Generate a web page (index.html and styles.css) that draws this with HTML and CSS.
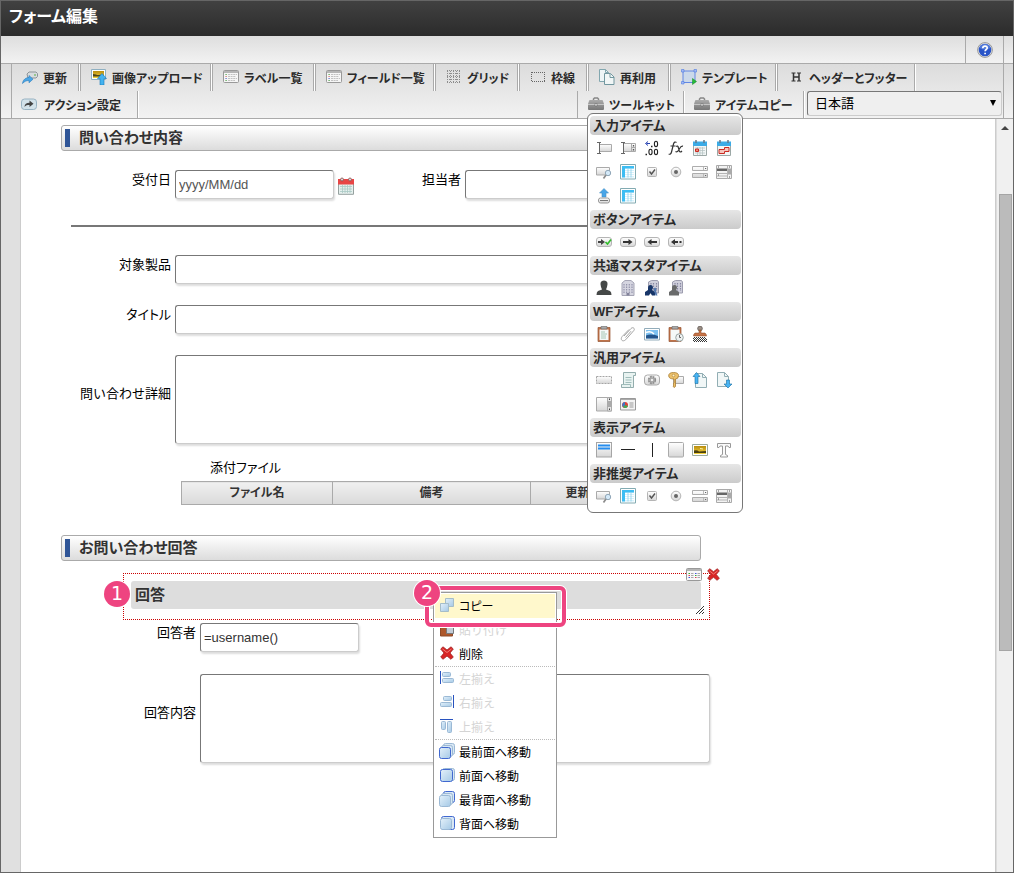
FILE: index.html
```html
<!DOCTYPE html>
<html lang="ja">
<head>
  <meta charset="UTF-8">
  <meta name="viewport" content="width=device-width, initial-scale=1.0">
  <title>フォーム編集</title>
  <link rel="stylesheet" href="styles.css">
</head>
<body>
  <svg class="sprite" aria-hidden="true">
    <defs>
      <linearGradient id="g-gray" x1="0" y1="0" x2="0" y2="1"><stop offset="0" stop-color="#fff"/><stop offset="1" stop-color="#d6d6d6"/></linearGradient>
      <linearGradient id="g-blue" x1="0" y1="0" x2="1" y2="1"><stop offset="0" stop-color="#e4f1fa"/><stop offset="1" stop-color="#a5c9e6"/></linearGradient>
      <linearGradient id="g-case" x1="0" y1="0" x2="0" y2="1"><stop offset="0" stop-color="#ababab"/><stop offset="1" stop-color="#777"/></linearGradient>
      <linearGradient id="g-gold" x1="0" y1="0" x2="0" y2="1"><stop offset="0" stop-color="#b98d10"/><stop offset="1" stop-color="#f5d33c"/></linearGradient>
    </defs>
    <symbol id="i-refresh" viewBox="0 0 16 16"><path d="M5 5l2-2h7l1.500 1.500v3L14 9H6z" fill="#d8dcde" stroke="#8d9498"/><path d="M12 6h2" stroke="#59b044"/><path d="M.5 14.500C1 10.500 4 8.500 7 8.500V6.500l4 3.700-4 3.600V11.500c-3 0-4.500 1-6.500 3z" fill="#4ba6e6" stroke="#2a7dbd" stroke-width=".6"/></symbol>
    <symbol id="i-upload-img" viewBox="0 0 16 16"><path d="M.5.500h14v10H.5z" fill="#fff" stroke="#8fb0c2"/><path d="M2 2h11v7H2z" fill="url(#g-gold)"/><path d="M2 5c3 0 4 1.500 6 1s4-.5 5 0v1.500H2z" fill="#4d4419"/><path d="M11 4.500l4.500 5H13V16H9V9.500H6.500z" fill="#43b3f0" stroke="#1a78b8" stroke-width=".6"/></symbol>
    <symbol id="i-list" viewBox="0 0 16 14"><rect x=".5" y=".5" width="15" height="12" rx="1" fill="#f6f6f6" stroke="#999"/><path d="M1 2h14" stroke="#b5b5b5" stroke-width="2"/><path d="M2.500 4.500h1.200M2.500 10.500h1.200" stroke="#4b9e42"/><path d="M2.500 6.500h1.200" stroke="#c66"/><path d="M2.500 8.500h1.200" stroke="#56c"/><path d="M5 4.500h9M5 6.500h8M5 8.500h9M5 10.500h7" stroke="#b5b5b5" stroke-width=".8" stroke-dasharray="2 .6"/></symbol>
    <symbol id="i-props" viewBox="0 0 16 14"><rect x=".5" y=".5" width="15" height="12" rx="1" fill="#f8f8f8" stroke="#999"/><path d="M1 2h14" stroke="#b5b5b5" stroke-width="2"/><path d="M2.500 5.500h1.500M9 7.500h1.500" stroke="#3cab35"/><path d="M2.500 7.500h1.500M9 9.500h1.500" stroke="#d45"/><path d="M2.500 9.500h1.500M9 5.500h1.500" stroke="#45d"/><path d="M5 5.500h2.500M5 7.500h2.500M5 9.500h2.500M11.500 5.500H14M11.500 7.500H14M11.500 9.500H14" stroke="#aaa"/></symbol>
    <symbol id="i-grid" viewBox="0 0 16 16"><path d="M1 1.500h14M1 4.500h14M1 7.500h14M1 10.500h14M1 13.500h14M1.500 2v12M4.500 2v12M7.500 2v12M10.500 2v12M13.500 2v12" fill="none" stroke="#8d8d8d" stroke-dasharray="1 1" shape-rendering="crispEdges"/></symbol>
    <symbol id="i-frame" viewBox="0 0 16 16"><path d="M2 3.500h13M2 12.500h13M1.500 3v10M14.500 3v10" fill="none" stroke="#666" stroke-dasharray="1 1" shape-rendering="crispEdges"/></symbol>
    <symbol id="i-reuse" viewBox="0 0 16 16"><path d="M.5.500h6l3 3v9h-9z" fill="#eef5f6" stroke="#82a7af"/><path d="M6.500.500v3h3" fill="none" stroke="#82a7af"/><path d="M5.500 4.500h6l3.500 3.500v7.500H5.500z" fill="#f1f6f6" stroke="#72979f"/><path d="M11 5v3.500h4" fill="none" stroke="#72979f"/></symbol>
    <symbol id="i-template" viewBox="0 0 16 16"><path d="M2 2h12v11.500H2z" fill="#cbd9ea" stroke="#6288e4"/><path d="M.5.500h2.500v2.500H.5zM13 .5h2.500v2.500H13zM.5 12.500h2.500v2.500H.5z" fill="#a5bcf5" stroke="#4d7ae0" stroke-width=".6"/><path d="M11.500 9.500l4 3-4 3z" fill="#25bd36" stroke="#138720" stroke-width=".5"/></symbol>
    <symbol id="i-header" viewBox="0 0 16 16"><path d="M3.500 4h4M9 4h4M3.500 12h4M9 12h4" fill="none" stroke="#333"/><path d="M5.500 4v8M11 4v8M5.500 8H11" fill="none" stroke="#333" stroke-width="1.500"/></symbol>
    <symbol id="i-action" viewBox="0 0 16 16"><rect x=".5" y="3" width="15" height="10.500" rx="3" fill="#d3e2ea" stroke="#98b3c3"/><path d="M3.500 11c0-3 2-4.200 5-4.200V4.500l4 3.300-4 3.200V9c-2 0-4 .2-5 2z" fill="#444"/></symbol>
    <symbol id="i-case" viewBox="0 0 16 14"><path d="M5.500 3.500V2L6.500 1h3l1 1v1.500" fill="none" stroke="#888" stroke-width="1.500"/><path d="M1 4q0-1 1-1h12q1 0 1 1l1 3v5q0 1-1 1H1q-1 0-1-1V7z" fill="url(#g-case)"/><path d="M0 7.500h16" stroke="#c5c5c5"/><path d="M7 6.500h2V9H7z" fill="#eee" stroke="#666" stroke-width=".6"/></symbol>
    <symbol id="i-help" viewBox="0 0 16 16"><circle cx="8" cy="8" r="7.400" fill="#e5e5e5" stroke="#999"/><circle cx="8" cy="8" r="6.300" fill="#2a55c8"/><path d="M2.500 6a5.800 5.800 0 0 1 11 0q-5.500 3-11 0" fill="#6e93e6" opacity=".6"/><path d="M5.800 6.300C5.800 3.300 10.300 3.400 10.200 6c0 1.500-2.100 1.600-2.100 3.300M8.100 10.700v1.600" fill="none" stroke="#fff" stroke-width="1.700"/></symbol>
    <symbol id="i-calendar" viewBox="0 0 16 18"><path d="M.5 3.500h15v13.800H.5z" fill="#e6f0ee" stroke="#95a19f"/><path d="M0 2h16v5.500H0z" fill="#e84545"/><circle cx="4" cy="2.500" r="1.500" fill="#d9d9d9" stroke="#8a4a4a" stroke-width=".8"/><circle cx="12" cy="2.500" r="1.500" fill="#d9d9d9" stroke="#8a4a4a" stroke-width=".8"/><path d="M2 9.500h12M2 12h12M2 14.500h12M4.500 8v8M7 8v8M9.500 8v8M12 8v8" stroke="#a9c9c4" stroke-width=".8"/></symbol>
    <symbol id="i-text" viewBox="0 0 16 16"><path d="M3.500 4.500h12v7h-12z" fill="url(#g-gray)" stroke="#aaa"/><path d="M1 2.500h4M3.500 3v10M1 13.500h4" fill="none" stroke="#666"/></symbol>
    <symbol id="i-spin" viewBox="0 0 16 16"><path d="M3.500 3.500h12v8h-12z" fill="url(#g-gray)" stroke="#aaa"/><path d="M1 2.500h4M3.500 3v10M1 13.500h4" fill="none" stroke="#666"/><path d="M11.500 4v7M11.500 7.500h4" stroke="#aaa"/><path d="M13.500 5v1.500M13.500 9v1.500" stroke="#555" stroke-width="1.300"/></symbol>
    <symbol id="i-decimal" viewBox="0 0 16 16"><path d="M2.500 3.500H6M4 1.500l-2.500 2L4 5.500" fill="none" stroke="#2440b0"/><path d="M7 6.500h1.500M1.500 14.500H3" stroke="#222" stroke-width="1.300"/><ellipse cx="12" cy="4" rx="1.600" ry="2.700" fill="none" stroke="#222" stroke-width="1.100"/><ellipse cx="6.500" cy="12" rx="1.600" ry="2.700" fill="none" stroke="#222" stroke-width="1.100"/><ellipse cx="12" cy="12" rx="1.600" ry="2.700" fill="none" stroke="#222" stroke-width="1.100"/></symbol>
    <symbol id="i-fx" viewBox="0 0 16 16"><path d="M8.500 2.500Q6.500 1 5.500 4L3.500 12q-.8 3-2.800 2M2.500 6h5M8 6.500q1.800-1.500 2.500 1.500l.8 3q.7 2 2.700 0M15 6.200q-2-.5-3.500 2.500l-1 1.600Q9 12.500 7.500 11.500" fill="none" stroke="#333" stroke-width="1.200"/></symbol>
    <symbol id="i-date" viewBox="0 0 16 16"><path d="M1.500 2.500h13v13h-13z" fill="#f2f6f6" stroke="#9ca8a6"/><path d="M1 1.500h14V6H1z" fill="#3cabe6"/><path d="M4 0v3M12 0v3" stroke="#678" stroke-width="1.500"/><path d="M3 8h10M3 10.500h10M3 13h10M5.500 7v8M8 7v8M10.500 7v8" stroke="#b3c0c0" stroke-width=".7"/><path d="M3.500 9h3v2.500h-3z" fill="#ef8d7b" stroke="#c92a22"/></symbol>
    <symbol id="i-period" viewBox="0 0 16 16"><path d="M1.500 2.500h13v13h-13z" fill="#f2f6f6" stroke="#9ca8a6"/><path d="M1 1.500h14V6H1z" fill="#3cabe6"/><path d="M4 0v3M12 0v3" stroke="#678" stroke-width="1.500"/><path d="M8.500 7.500h4.500v4H8.500v2H3v-4h5.500z" fill="#f6c4bc" stroke="#c92a22"/></symbol>
    <symbol id="i-lookup" viewBox="0 0 16 16"><path d="M.5 3.500h13V11H.5z" fill="url(#g-gray)" stroke="#aaa"/><circle cx="12" cy="9" r="2.700" fill="#d4e9f8" stroke="#91a7b8"/><path d="M10 11l-2.500 3.500" stroke="#8c8c8c" stroke-width="1.700"/></symbol>
    <symbol id="i-table" viewBox="0 0 16 16"><path d="M.5.500h15v14.500H.5z" fill="#fff" stroke="#82abb2"/><path d="M2 2h12v11.500H2z" fill="#d8f2fc"/><path d="M2 2h12v2.500H2zM2 2h3v11.500H2z" fill="#3dbdf3"/><path d="M5 5.500h9M5 7.500h9M5 9.500h9M5 11.500h9" stroke="#fff"/><path d="M8 4.500v9M11 4.500v9" stroke="#8ecfe8" stroke-width=".8"/></symbol>
    <symbol id="i-check" viewBox="0 0 16 16"><rect x="3.500" y="3.500" width="9" height="9" rx="1" fill="url(#g-gray)" stroke="#b5b5b5"/><path d="M5.500 7.500l2 2.500 3.500-4.500" fill="none" stroke="#555" stroke-width="1.400"/></symbol>
    <symbol id="i-radio" viewBox="0 0 16 16"><circle cx="8" cy="8" r="4.800" fill="url(#g-gray)" stroke="#b5b5b5"/><circle cx="8" cy="8" r="2" fill="#666"/></symbol>
    <symbol id="i-combo" viewBox="0 0 16 16"><path d="M.5 2.500h15v4H.5zM.5 9.500h15v4H.5z" fill="url(#g-gray)" stroke="#adadad"/><path d="M11.500 3v3M11.500 10v3" stroke="#bbb"/><path d="M13 4.500h1.200M13 11.500h1.200" stroke="#666"/></symbol>
    <symbol id="i-listbox" viewBox="0 0 16 16"><path d="M.5 1.500h15v13H.5z" fill="#f3f3f3" stroke="#aaa"/><path d="M1 9.500h10M1 12h10M11.500 2v13" stroke="#b5b5b5"/><path d="M1 4.500h10v2.500H1z" fill="#666"/><path d="M12 4.500h3v6h-3z" fill="#aaa"/><path d="M13.500 2.500v1M13.500 12.500v1M2.500 2.500v1M2.500 10.500v1" stroke="#555"/></symbol>
    <symbol id="i-file" viewBox="0 0 16 16"><path d="M8 .5L12.500 5H10v4H6V5H3.500z" fill="#48a5e8" stroke="#4a92c5" stroke-width=".6"/><rect x="2.500" y="10" width="11" height="5" rx="2" fill="url(#g-gray)" stroke="#999"/><path d="M4 12.500h8" stroke="#777"/></symbol>
    <symbol id="i-btn-ok" viewBox="0 0 16 16"><rect x=".5" y="3.500" width="15" height="9" rx="2.500" fill="url(#g-gray)" stroke="#b5b5b5"/><path d="M2 7H5V5l4 3-4 3V9H2z" fill="#444"/><path d="M9.500 8l2 2L15 5.500" fill="none" stroke="#31bd2b" stroke-width="1.600"/></symbol>
    <symbol id="i-btn-next" viewBox="0 0 16 16"><rect x=".5" y="3.500" width="15" height="9" rx="2.500" fill="url(#g-gray)" stroke="#b5b5b5"/><path d="M3 7h5.500V5l4 3-4 3V9H3z" fill="#333"/></symbol>
    <symbol id="i-btn-back" viewBox="0 0 16 16"><rect x=".5" y="3.500" width="15" height="9" rx="2.500" fill="url(#g-gray)" stroke="#b5b5b5"/><path d="M13 7H7.500V5l-4 3 4 3V9H13z" fill="#333"/></symbol>
    <symbol id="i-btn-return" viewBox="0 0 16 16"><rect x=".5" y="3.500" width="15" height="9" rx="2.500" fill="url(#g-gray)" stroke="#b5b5b5"/><path d="M10 7H7V5L3 8l4 3V9h3zM11.500 7h2v2h-2z" fill="#333"/></symbol>
    <symbol id="i-user" viewBox="0 0 16 16"><path d="M5 7Q3 .5 8 .5T11 7L10 9.500l4 1.500q1.500 1 1.500 4H.5q0-3 1.500-4l4-1.500z" fill="#454847"/></symbol>
    <symbol id="i-building" viewBox="0 0 16 16"><path d="M2 15.500V3l3-2.500h6L14 3v12.500z" fill="#d5d5e0" stroke="#a5a5b5"/><path d="M4 4v9M6.600 4v9M9.300 4v9M12 4v9" stroke="#9595ac" stroke-width="1.200" stroke-dasharray="1.500 1"/><path d="M6.500 13h3v2.500h-3z" fill="#82829a"/></symbol>
    <symbol id="i-user-org" viewBox="0 0 16 16"><path d="M4.500 13V2l3-1.500h6l1 1.500V13z" fill="#d0d0dc" stroke="#9d9daf"/><path d="M7 3v8M9.500 3v8M12.500 3v8" stroke="#8888a2" stroke-width="1.200" stroke-dasharray="1.500 1"/><path d="M4 8q0-3 2.500-3T9 8L8 10l3 2v3.500H8L6.500 13 5 15.500H1V12l3-2z" fill="#173568"/><path d="M9.500 9q1.500-3 3 0L12 11l1.500 4.500h-2z" fill="#5478ae"/></symbol>
    <symbol id="i-user-role" viewBox="0 0 16 16"><path d="M4.500 13V2l3-1.500h6l1 1.500V13z" fill="#d0d0dc" stroke="#9d9daf"/><path d="M7 3v8M9.500 3v8M12.500 3v8" stroke="#8888a2" stroke-width="1.200" stroke-dasharray="1.500 1"/><path d="M4 8q0-3 2.500-3T9 8L8 10l3 2v3.500H1V12l3-2z" fill="#696b6b"/></symbol>
    <symbol id="i-clipboard" viewBox="0 0 16 16"><path d="M2 1.500h12v14H2z" fill="#c0734a" stroke="#955530" stroke-width=".7"/><path d="M3.500 3.500h9v10.500h-9z" fill="#f5f9f8"/><path d="M5 .5h6V3H5z" fill="#aaa" stroke="#666" stroke-width=".6"/><path d="M5 6h4M5 8h6M5 10h5M5 12h5" stroke="#93baa2" stroke-width=".8"/></symbol>
    <symbol id="i-clip" viewBox="0 0 16 16"><path d="M4 10l7-7.500c2-2 4.500.2 2.700 2.200l-8 9c-3 2.800-6-.2-3.500-3.200L9 3.500M5.500 11.500l5.500-6.300" fill="none" stroke="#a5a5a5"/></symbol>
    <symbol id="i-image" viewBox="0 0 16 16"><path d="M.5 2.500h15v11.500H.5z" fill="#fff" stroke="#92acba"/><path d="M2 4h12v8.500H2z" fill="#7cc0f0"/><path d="M2 9.500q5-2 12 .5v2.500H2z" fill="#24558c"/><path d="M2 6.500q5-2 8 1.500" stroke="#fff" stroke-width="1.500" fill="none"/></symbol>
    <symbol id="i-clip-time" viewBox="0 0 16 16"><path d="M1 1.500h12v14H1z" fill="#c0734a" stroke="#955530" stroke-width=".7"/><path d="M2.500 3.500h9v10.500h-9z" fill="#f5f9f8"/><path d="M4 .5h6V3H4z" fill="#aaa" stroke="#666" stroke-width=".6"/><circle cx="11.500" cy="11.500" r="3.800" fill="#edf1f1" stroke="#99a5a4"/><path d="M11.500 9v2.500H13" stroke="#666" fill="none"/></symbol>
    <symbol id="i-stamp" viewBox="0 0 16 16"><circle cx="8" cy="2.500" r="2.300" fill="#9b9087" stroke="#716862"/><path d="M7 4h2v3h4q1.500 1 1.500 3h-13q0-2 1.500-3h4z" fill="#c8754a" stroke="#86401e" stroke-width=".5"/><path d="M2 11.500h12M1 12.500h14M2 13.500h13M1 14.500h14M2 15.500h13" stroke="#333" stroke-dasharray="1 1" shape-rendering="crispEdges"/></symbol>
    <symbol id="i-group" viewBox="0 0 16 16"><path d="M.5 4.500h15v7H.5z" fill="url(#g-gray)" stroke="#a5a5a5" stroke-dasharray="2 1"/></symbol>
    <symbol id="i-script" viewBox="0 0 16 16"><path d="M3.500 .5h12v3h-2v12H1.500v-3h2z" fill="#e8f3f1" stroke="#93adad"/><path d="M5.500 5.500h6M5.500 8h6M5.500 10.500h6M1.500 12.500h9v3" stroke="#a0bdbb" fill="none"/></symbol>
    <symbol id="i-gear" viewBox="0 0 16 16"><rect x=".5" y="3" width="15" height="10" rx="3" fill="url(#g-gray)" stroke="#aaa"/><circle cx="8" cy="8" r="3.300" fill="none" stroke="#8c8c8c" stroke-width="1.700" stroke-dasharray="2 .6"/><circle cx="8" cy="8" r="2" fill="#eee" stroke="#8c8c8c"/></symbol>
    <symbol id="i-key" viewBox="0 0 16 16"><path d="M5.500 4.500h10v7h-10z" fill="url(#g-gray)" stroke="#aaa"/><path d="M.7 4Q.5 .5 5.500 .5t5 3Q10.500 7 7.500 7v7.500L6 15.500 5 14l1-1-1-1 1-1V7Q1 7 .7 4z" fill="#ecc06a" stroke="#a87c32" stroke-width=".8"/><circle cx="5.500" cy="3.500" r="1.300" fill="#fff3c8" stroke="#9c7026" stroke-width=".5"/></symbol>
    <symbol id="i-doc-up" viewBox="0 0 16 16"><path d="M3.500 1.500h7l4 4v10h-11z" fill="#f1f7f7" stroke="#92aeb4"/><path d="M10.500 1.500v4h4" fill="none" stroke="#92aeb4"/><path d="M4.500.500L8 4.500H6v7H3v-7H1z" fill="#47b3f3" stroke="#176d9f" stroke-width=".6"/></symbol>
    <symbol id="i-doc-down" viewBox="0 0 16 16"><path d="M1.500.500h7l4 4v10h-11z" fill="#f1f7f7" stroke="#92aeb4"/><path d="M8.500.500v4h4" fill="none" stroke="#92aeb4"/><path d="M10.500 8h3v4h2.500L12 16l-4-4h2.500z" fill="#47b3f3" stroke="#176d9f" stroke-width=".6"/></symbol>
    <symbol id="i-scroll" viewBox="0 0 16 16"><path d="M.5 1.500h15v13.500H.5z" fill="url(#g-gray)" stroke="#aaa"/><path d="M11.500 1.500h4V15h-4z" fill="#e5e5e5" stroke="#aaa"/><path d="M12 5h3v6h-3z" fill="#aaa"/><path d="M13.500 2.500v1.500M13.500 12.500V14" stroke="#444"/></symbol>
    <symbol id="i-chart" viewBox="0 0 16 16"><path d="M.5 2.500h15v11.500H.5z" fill="#f3f3f3" stroke="#999"/><path d="M1 3.500h14" stroke="#aaa"/><circle cx="5" cy="9" r="3" fill="#df4138"/><path d="M5 9V6A3 3 0 0 0 3 11z" fill="#3979cd"/><path d="M5 9l-2 2a3 3 0 0 0 5-1z" fill="#43ab58"/><path d="M9.500 7h4M9.500 9h4M9.500 11h4" stroke="#999"/></symbol>
    <symbol id="i-label" viewBox="0 0 16 16"><rect x=".5" y=".5" width="15" height="14.500" fill="url(#g-gray)" stroke="#a5a5a5"/><path d="M2 2.500h12v2H2zM2 5.500h12v2H2z" fill="#258df0"/></symbol>
    <symbol id="i-hline" viewBox="0 0 16 16"><path d="M1 7.500h14" stroke="#222"/></symbol>
    <symbol id="i-vline" viewBox="0 0 16 16"><path d="M8.500 1v14" stroke="#222"/></symbol>
    <symbol id="i-box" viewBox="0 0 16 16"><rect x=".5" y=".5" width="15" height="14.500" rx="1" fill="url(#g-gray)" stroke="#aaa"/></symbol>
    <symbol id="i-photo" viewBox="0 0 16 16"><path d="M.5 2.500h15v11H.5z" fill="#fff" stroke="#9cab9c"/><path d="M2 4h12v8H2z" fill="url(#g-gold)"/><path d="M2 8.500q3-1 5 1l7-.5V11H2z" fill="#4b4110"/><path d="M8 6.500l3 .5" stroke="#fff5a0"/></symbol>
    <symbol id="i-t" viewBox="0 0 16 16"><path d="M1.500 1.500h13v4H13L12 4H9.500v8.500l2 1v1.500h-7v-1.500l2-1V4H4L3 5.500H1.500z" fill="#fafafa" stroke="#999"/></symbol>
    <symbol id="i-delete" viewBox="0 0 14 14"><path d="M3 .8L7 4 11 .8 13.300 3 10 7l3.300 4-2.300 2.300L7 10l-4 3.300L.7 11 4 7 .7 3z" fill="#d92525" stroke="#9e2424" stroke-width=".8"/><path d="M2.500 3L7 6.500 11.500 3" fill="none" stroke="#f08078"/></symbol>
    <symbol id="i-resize" viewBox="0 0 8 8"><path d="M0 8L8 0M3 8l5-5M6 8l2-2" stroke="#333"/></symbol>
    <symbol id="i-copy" viewBox="0 0 16 16"><path d="M6.500 1.500h8v8h-8z" fill="url(#g-blue)" stroke="#a5bdc9"/><path d="M1.500 6.500h8v8h-8z" fill="url(#g-blue)" stroke="#a5bdc9"/></symbol>
    <symbol id="i-paste" viewBox="0 0 16 16"><path d="M1.500 2h12v13h-12z" fill="#ad572b" stroke="#8c4a28"/><path d="M4 1h7v3H4z" fill="#777"/><path d="M7.500 4.500h7v8h-7z" fill="#c4ccd7" stroke="#777"/></symbol>
    <symbol id="i-left" viewBox="0 0 16 16"><path d="M1.500 1v13" stroke="#2852bf"/><rect x="3.500" y="2.500" width="8" height="4" rx="1" fill="url(#g-blue)" stroke="#9bb9d5"/><rect x="3.500" y="8.500" width="11" height="4" rx="1" fill="url(#g-blue)" stroke="#9bb9d5"/></symbol>
    <symbol id="i-right" viewBox="0 0 16 16"><path d="M14.500 1v13" stroke="#2852bf"/><rect x="4.500" y="2.500" width="8" height="4" rx="1" fill="url(#g-blue)" stroke="#9bb9d5"/><rect x="1.500" y="8.500" width="11" height="4" rx="1" fill="url(#g-blue)" stroke="#9bb9d5"/></symbol>
    <symbol id="i-top" viewBox="0 0 16 16"><path d="M1 1.500h13" stroke="#2852bf"/><rect x="2.500" y="3.500" width="4" height="8" rx="1" fill="url(#g-blue)" stroke="#9bb9d5"/><rect x="8.500" y="3.500" width="4" height="11" rx="1" fill="url(#g-blue)" stroke="#9bb9d5"/></symbol>
    <symbol id="i-front-most" viewBox="0 0 16 16"><rect x="4.500" y=".5" width="11" height="11" rx="2" fill="#d8e7f4" stroke="#9bb9d5"/><rect x="2.500" y="2.500" width="11" height="11" rx="2" fill="#d8e7f4" stroke="#9bb9d5"/><rect x=".5" y="4.500" width="11" height="11" rx="2" fill="url(#g-blue)" stroke="#4068d0"/></symbol>
    <symbol id="i-front" viewBox="0 0 16 16"><rect x="3.500" y="1.500" width="12" height="12" rx="2" fill="#d8e7f4" stroke="#9bb9d5"/><rect x="1.500" y="2.500" width="12" height="12" rx="2" fill="url(#g-blue)" stroke="#4068d0"/></symbol>
    <symbol id="i-back-most" viewBox="0 0 16 16"><rect x="4.500" y=".5" width="11" height="11" rx="2" fill="#d8e7f4" stroke="#4068d0"/><rect x="2.500" y="2.500" width="11" height="11" rx="2" fill="#d8e7f4" stroke="#9bb9d5"/><rect x=".5" y="4.500" width="11" height="11" rx="2" fill="url(#g-blue)" stroke="#9bb9d5"/></symbol>
    <symbol id="i-back" viewBox="0 0 16 16"><rect x="2.500" y="1.500" width="13" height="13" rx="2" fill="#d8e7f4" stroke="#4068d0"/><rect x="1.500" y="3.500" width="11" height="11" rx="2" fill="url(#g-blue)" stroke="#9bb9d5"/></symbol>
  </svg>

  <div class="window">
    <header class="titlebar"><h1>フォーム編集</h1></header>

    <div class="helpbar">
      <button class="help" aria-label="ヘルプ"><svg class="icon"><use href="#i-help"/></svg></button>
    </div>

    <div class="toolbar">
      <div class="toolbar-row main-tools">
        <button class="tool"><svg class="icon"><use href="#i-refresh"/></svg>更新</button>
        <button class="tool"><svg class="icon"><use href="#i-upload-img"/></svg>画像アップロード</button>
        <button class="tool"><svg class="icon"><use href="#i-list"/></svg>ラベル一覧</button>
        <button class="tool"><svg class="icon"><use href="#i-list"/></svg>フィールド一覧</button>
        <button class="tool"><svg class="icon"><use href="#i-grid"/></svg>グリッド</button>
        <button class="tool"><svg class="icon"><use href="#i-frame"/></svg>枠線</button>
        <button class="tool"><svg class="icon"><use href="#i-reuse"/></svg>再利用</button>
        <button class="tool"><svg class="icon"><use href="#i-template"/></svg>テンプレート</button>
        <button class="tool"><svg class="icon"><use href="#i-header"/></svg>ヘッダーとフッター</button>
      </div>
      <div class="toolbar-row sub-tools">
        <button class="tool action"><svg class="icon"><use href="#i-action"/></svg>アクション設定</button>
        <div class="toolkit">
          <button class="tool"><svg class="icon"><use href="#i-case"/></svg>ツールキット</button>
          <div class="palette">
            <section>
              <h2>入力アイテム</h2>
              <div class="items">
                <button aria-label="文字列"><svg class="icon"><use href="#i-text"/></svg></button>
                <button aria-label="数値"><svg class="icon"><use href="#i-spin"/></svg></button>
                <button aria-label="小数"><svg class="icon"><use href="#i-decimal"/></svg></button>
                <button aria-label="関数"><svg class="icon"><use href="#i-fx"/></svg></button>
                <button aria-label="日付"><svg class="icon"><use href="#i-date"/></svg></button>
                <button aria-label="期間"><svg class="icon"><use href="#i-period"/></svg></button>
                <button aria-label="検索"><svg class="icon"><use href="#i-lookup"/></svg></button>
                <button aria-label="表"><svg class="icon"><use href="#i-table"/></svg></button>
                <button aria-label="チェックボックス"><svg class="icon"><use href="#i-check"/></svg></button>
                <button aria-label="ラジオボタン"><svg class="icon"><use href="#i-radio"/></svg></button>
                <button aria-label="セレクトボックス"><svg class="icon"><use href="#i-combo"/></svg></button>
                <button aria-label="リストボックス"><svg class="icon"><use href="#i-listbox"/></svg></button>
                <button aria-label="ファイルアップロード"><svg class="icon"><use href="#i-file"/></svg></button>
                <button aria-label="グリッドテーブル"><svg class="icon"><use href="#i-table"/></svg></button>
              </div>
            </section>
            <section>
              <h2>ボタンアイテム</h2>
              <div class="items">
                <button aria-label="登録"><svg class="icon"><use href="#i-btn-ok"/></svg></button>
                <button aria-label="次へ"><svg class="icon"><use href="#i-btn-next"/></svg></button>
                <button aria-label="戻る"><svg class="icon"><use href="#i-btn-back"/></svg></button>
                <button aria-label="一覧へ戻る"><svg class="icon"><use href="#i-btn-return"/></svg></button>
              </div>
            </section>
            <section>
              <h2>共通マスタアイテム</h2>
              <div class="items">
                <button aria-label="ユーザ"><svg class="icon"><use href="#i-user"/></svg></button>
                <button aria-label="組織"><svg class="icon"><use href="#i-building"/></svg></button>
                <button aria-label="所属"><svg class="icon"><use href="#i-user-org"/></svg></button>
                <button aria-label="役職"><svg class="icon"><use href="#i-user-role"/></svg></button>
              </div>
            </section>
            <section>
              <h2>WFアイテム</h2>
              <div class="items">
                <button aria-label="案件"><svg class="icon"><use href="#i-clipboard"/></svg></button>
                <button aria-label="添付"><svg class="icon"><use href="#i-clip"/></svg></button>
                <button aria-label="フロー画像"><svg class="icon"><use href="#i-image"/></svg></button>
                <button aria-label="履歴"><svg class="icon"><use href="#i-clip-time"/></svg></button>
                <button aria-label="印影"><svg class="icon"><use href="#i-stamp"/></svg></button>
              </div>
            </section>
            <section>
              <h2>汎用アイテム</h2>
              <div class="items">
                <button aria-label="隠し項目"><svg class="icon"><use href="#i-group"/></svg></button>
                <button aria-label="スクリプト"><svg class="icon"><use href="#i-script"/></svg></button>
                <button aria-label="イベントボタン"><svg class="icon"><use href="#i-gear"/></svg></button>
                <button aria-label="一意番号"><svg class="icon"><use href="#i-key"/></svg></button>
                <button aria-label="データ出力"><svg class="icon"><use href="#i-doc-up"/></svg></button>
                <button aria-label="データ取込"><svg class="icon"><use href="#i-doc-down"/></svg></button>
                <button aria-label="フレーム"><svg class="icon"><use href="#i-scroll"/></svg></button>
                <button aria-label="ガジェット"><svg class="icon"><use href="#i-chart"/></svg></button>
              </div>
            </section>
            <section>
              <h2>表示アイテム</h2>
              <div class="items">
                <button aria-label="見出し"><svg class="icon"><use href="#i-label"/></svg></button>
                <button aria-label="横線"><svg class="icon"><use href="#i-hline"/></svg></button>
                <button aria-label="縦線"><svg class="icon"><use href="#i-vline"/></svg></button>
                <button aria-label="四角形"><svg class="icon"><use href="#i-box"/></svg></button>
                <button aria-label="画像"><svg class="icon"><use href="#i-photo"/></svg></button>
                <button aria-label="テキスト"><svg class="icon"><use href="#i-t"/></svg></button>
              </div>
            </section>
            <section>
              <h2>非推奨アイテム</h2>
              <div class="items">
                <button aria-label="旧検索"><svg class="icon"><use href="#i-lookup"/></svg></button>
                <button aria-label="旧表"><svg class="icon"><use href="#i-table"/></svg></button>
                <button aria-label="旧チェックボックス"><svg class="icon"><use href="#i-check"/></svg></button>
                <button aria-label="旧ラジオボタン"><svg class="icon"><use href="#i-radio"/></svg></button>
                <button aria-label="旧セレクトボックス"><svg class="icon"><use href="#i-combo"/></svg></button>
                <button aria-label="旧リストボックス"><svg class="icon"><use href="#i-listbox"/></svg></button>
              </div>
            </section>
          </div>
        </div>
        <button class="tool item-copy"><svg class="icon"><use href="#i-case"/></svg>アイテムコピー</button>
        <div class="language">
          <select aria-label="言語"><option>日本語</option></select>
        </div>
      </div>
    </div>

    <main class="workspace">
      <div class="canvas">
        <form class="form">
          <h2 class="section-title">問い合わせ内容</h2>
          <div class="field first">
            <label for="received">受付日</label>
            <input id="received" class="short" type="text" placeholder="yyyy/MM/dd">
            <button type="button" class="pick" aria-label="カレンダー"><svg><use href="#i-calendar"/></svg></button>
            <label for="person">担当者</label>
            <input id="person" class="short" type="text">
          </div>
          <hr>
          <div class="field">
            <label for="product">対象製品</label>
            <input id="product" type="text">
          </div>
          <div class="field">
            <label for="subject" class="kana">タイトル</label>
            <input id="subject" type="text">
          </div>
          <div class="field area">
            <label for="detail">問い合わせ詳細</label>
            <textarea id="detail"></textarea>
          </div>
          <table class="files">
            <caption class="kana">添付ファイル</caption>
            <tr><th class="name kana">ファイル名</th><th class="note">備考</th><th class="date">更新日</th></tr>
          </table>

          <h2 class="section-title">お問い合わせ回答</h2>
          <div class="selected">
            <div class="selected-label">回答</div>
            <button type="button" class="props" aria-label="プロパティ"><svg><use href="#i-props"/></svg></button>
            <button type="button" class="remove" aria-label="アイテム削除"><svg><use href="#i-delete"/></svg></button>
            <svg class="resize"><use href="#i-resize"/></svg>
            <span class="badge one">1</span>

            <div class="context-menu">
              <button type="button" class="active kana"><svg class="icon"><use href="#i-copy"/></svg>コピー</button>
              <button type="button" disabled><svg class="icon"><use href="#i-paste"/></svg>貼り付け</button>
              <button type="button"><svg class="icon small"><use href="#i-delete"/></svg>削除</button>
              <button type="button" class="split" disabled><svg class="icon"><use href="#i-left"/></svg>左揃え</button>
              <button type="button" disabled><svg class="icon"><use href="#i-right"/></svg>右揃え</button>
              <button type="button" disabled><svg class="icon"><use href="#i-top"/></svg>上揃え</button>
              <button type="button" class="split"><svg class="icon"><use href="#i-front-most"/></svg>最前面へ移動</button>
              <button type="button"><svg class="icon"><use href="#i-front"/></svg>前面へ移動</button>
              <button type="button"><svg class="icon"><use href="#i-back-most"/></svg>最背面へ移動</button>
              <button type="button"><svg class="icon"><use href="#i-back"/></svg>背面へ移動</button>
            </div>
            <div class="callout"></div>
            <span class="badge two">2</span>
          </div>
          <div class="field answer">
            <label for="answerer">回答者</label>
            <input id="answerer" class="short" type="text" value="=username()">
          </div>
          <div class="field area answer">
            <label for="answer">回答内容</label>
            <textarea id="answer"></textarea>
          </div>
        </form>
      </div>
      <div class="scrollbar">
        <div class="arrow"></div>
        <div class="thumb"></div>
      </div>
    </main>
  </div>
</body>
</html>
```
FILE: styles.css
```css
* { box-sizing: border-box; }
body {
  margin: 0;
  font-family: "Liberation Sans", "Noto Sans CJK JP", sans-serif;
  font-size: 13px;
  color: #000;
}
h1, h2 { margin: 0; }
button {
  margin: 0;
  padding: 0;
  border: none;
  background: none;
  font-family: inherit;
  color: inherit;
  cursor: pointer;
}
svg { display: block; }
.sprite { position: absolute; width: 0; height: 0; }
.icon { width: 16px; height: 16px; flex: none; }
.kana { font-feature-settings: "palt"; }

.window {
  display: flex;
  flex-direction: column;
  height: 100vh;
  border: 1px solid #666;
  background: #e0e0e0;
}

/* title and help bar */
.titlebar {
  flex: none;
  height: 35px;
  padding: 0 8px;
  background: linear-gradient(#414141, #2b2b2b);
  color: #fff;
}
.titlebar h1 { font-size: 16px; line-height: 31px; font-feature-settings: "palt"; }
.helpbar {
  flex: none;
  display: flex;
  justify-content: flex-end;
  height: 28px;
  padding-right: 9px;
  border-bottom: 1px solid #aaa;
  background: linear-gradient(#dedede, #f2f2f2);
}
.help {
  display: flex;
  align-items: center;
  justify-content: center;
  width: 39px;
  border: solid #aaa;
  border-width: 0 1px;
}

/* toolbar */
.toolbar {
  flex: none;
  padding: 0 9px 0 10px;
  border-bottom: 1px solid #aaa;
  background: linear-gradient(#dcdcdc, #f2f2f2);
}
.toolbar-row { height: 27px; border: solid #aaa; border-width: 0 1px; }
.main-tools {
  display: grid;
  grid-template-columns: 67px 131px 102px 119px 83px 68px 81px 106px 138px;
  column-gap: 1px;
}
.sub-tools { display: flex; }
.tool {
  display: flex;
  align-items: center;
  gap: 5px;
  padding: 0 0 1px 10px;
  border-right: 1px solid #aaa;
  box-shadow: 1px 0 #fff;
  font-size: 12px;
  font-weight: bold;
  color: #2b2b2b;
  font-feature-settings: "palt";
  white-space: nowrap;
}
.main-tools .tool + .tool { border-left: 1px solid #aaa; }
.action { width: 126px; padding-left: 9px; gap: 7px; }
.toolkit {
  position: relative;
  display: flex;
  margin-left: auto;
  border-left: 1px solid #aaa;
}
.toolkit .tool { width: 106px; }
.item-copy { width: 120px; }
.language { position: relative; width: 199px; padding: 0 1px 2px 3px; }
.language select {
  width: 100%;
  height: 25px;
  padding: 0 7px;
  border: 1px solid #777;
  border-right-color: #ccc;
  border-bottom-color: #ccc;
  border-radius: 3px;
  background: #efefef;
  font-family: inherit;
  font-size: 13px;
  appearance: none;
}
.language::after {
  content: "";
  position: absolute;
  top: 9px;
  right: 7px;
  border: solid transparent;
  border-width: 6px 3px 0;
  border-top-color: #000;
}

/* toolkit palette */
.palette {
  position: absolute;
  z-index: 3;
  top: 22px;
  left: 9px;
  width: 156px;
  padding: 2px 1px 2px 2px;
  border: 1px solid #777;
  border-radius: 6px;
  background: #fff;
}
.palette section { padding-bottom: 2px; }
.palette h2 {
  height: 19px;
  margin-bottom: 1px;
  padding-left: 3px;
  border-radius: 4px;
  background: linear-gradient(#e6e6e6, #cbcbcb);
  font-size: 13px;
  line-height: 19px;
  color: #2b2b2b;
  font-feature-settings: "palt";
}
.items {
  display: grid;
  grid-template-columns: repeat(6, 24px);
  grid-auto-rows: 24px;
  padding-left: 2px;
}
.items button { display: flex; align-items: center; justify-content: center; }

/* form canvas */
.workspace { flex: 1; display: flex; min-height: 0; padding-left: 19px; }
.canvas {
  flex: 1;
  padding: 6px 40px;
  border: solid #ccc;
  border-width: 0 1px;
  background: #fff;
}
.form { max-width: 649px; }
.section-title {
  height: 26px;
  margin-right: 9px;
  padding: 3px;
  border: 1px solid #aaa;
  border-radius: 3px;
  background: linear-gradient(#fff, #dcdcdc);
  font-size: 15px;
  line-height: 18px;
  color: #333;
  font-feature-settings: "palt";
}
.section-title::before {
  content: "";
  display: inline-block;
  width: 5px;
  height: 18px;
  margin-right: 9px;
  background: #2f5597;
  vertical-align: top;
}
.field {
  display: flex;
  gap: 4px;
  margin: 21px 26px 0 0;
}
.field label { width: 110px; line-height: 20px; text-align: right; white-space: nowrap; }
.field input, .field textarea {
  flex: 1;
  min-width: 0;
  padding: 0 3px;
  border: 1px solid #777;
  border-right-color: #ccc;
  border-bottom-color: #ccc;
  border-radius: 3px;
  box-shadow: 1px 2px 2px #ddd;
  background: #fff;
  font-family: "Liberation Sans", sans-serif;
  font-size: 13px;
  color: #333;
}
.field input { height: 29px; }
.field input::placeholder { color: #555; }
.field input.short { flex: none; width: 159px; }
.field textarea { height: 89px; resize: none; }
.first { margin-top: 19px; }
.pick { width: 16px; height: 18px; margin-top: 7px; }
.pick svg { width: 16px; height: 18px; }
.pick + label { width: 103px; }
hr {
  height: 2px;
  margin: 26px 9px 28px 10px;
  border: none;
  background: #777;
}
hr + .field { margin-top: 0; }
.area { align-items: center; }
.area label { padding-bottom: 12px; }
.answer { margin: 3px 0 0; }
.answer label { width: 135px; }
.area.answer { margin-top: 22px; }

.files { margin: 14px 0 30px 120px; border-collapse: collapse; }
.files caption {
  padding: 0 0 3px 29px;
  line-height: 20px;
  text-align: left;
}
.files th {
  height: 23px;
  padding: 0;
  border: 1px solid #aaa;
  background: linear-gradient(#f0f0f0, #dadada);
  font-size: 12px;
  line-height: 20px;
  color: #333;
}
.name { width: 151px; }
.note { width: 198px; }
.date { width: 106px; }

/* selected item */
.selected {
  position: relative;
  margin: 12px 0 0 62px;
  padding: 7px 8px 10px 7px;
  border: 1px dotted #c00;
}
.selected-label {
  height: 28px;
  padding-left: 4px;
  border-radius: 3px;
  background: #ddd;
  font-size: 15px;
  font-weight: bold;
  line-height: 27px;
  color: #333;
}
.props, .remove, .resize { position: absolute; }
.props { top: -6px; right: 7px; }
.props svg { width: 16px; height: 14px; }
.remove { top: -6px; right: -11px; }
.remove svg { width: 13px; height: 13px; }
.resize { right: 5px; bottom: 5px; width: 8px; height: 8px; }
.badge {
  position: absolute;
  z-index: 3;
  width: 26px;
  height: 26px;
  border-radius: 50%;
  background: #ee4480;
  box-shadow: 0 0 0 1px #fff;
  font-family: "DejaVu Sans", sans-serif;
  font-size: 19px;
  line-height: 25px;
  text-align: center;
  color: #fff;
}
.one { top: 7px; left: -20px; }
.two { top: 6px; left: 290px; }
.callout {
  position: absolute;
  z-index: 2;
  top: 12px;
  left: 301px;
  width: 141px;
  height: 41px;
  border: 4px solid #ee4480;
  border-radius: 6px;
  box-shadow: 0 0 0 1px #fff, inset 0 0 0 1px #fff;
}

/* right-click menu */
.context-menu {
  position: absolute;
  z-index: 1;
  top: 18px;
  left: 309px;
  width: 124px;
  padding: 1px;
  border: 1px solid #999;
  background: #fff;
}
.context-menu button {
  display: flex;
  align-items: center;
  gap: 4px;
  width: 100%;
  height: 24px;
  padding: 0 0 2px 4px;
  font-size: 12px;
}
.context-menu button:disabled { color: #d4d4d4; }
.context-menu .split { height: 25px; border-top: 1px dotted #bbb; }
.context-menu .active { background: #fff8cc; }
.context-menu .small { padding: 1px; }

.scrollbar {
  display: flex;
  flex-direction: column;
  align-items: center;
  width: 17px;
  border-left: 1px solid #ddd;
  background: #f0f0f0;
}
.scrollbar::after { content: ""; flex: 222; }
.arrow { flex: 75; }
.arrow::before {
  content: "";
  display: block;
  margin-top: 7px;
  border: solid transparent;
  border-width: 0 4px 4px;
  border-bottom-color: #444;
}
.thumb { flex: 456; width: 13px; border: 1px solid #a5a5a5; background: #bbb; }
```
